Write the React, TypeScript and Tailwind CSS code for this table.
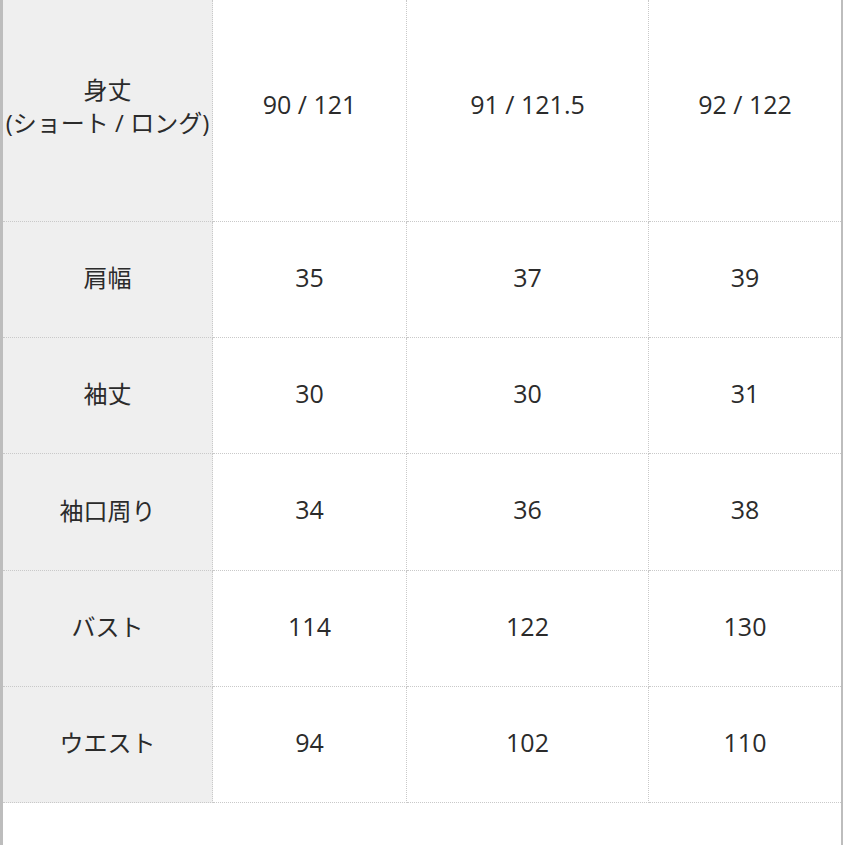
import React from "react";

const rows: { label: React.ReactNode; values: string[]; h: string }[] = [
  {
    label: (
      <>
        身丈
        <br />
        (ショート / ロング)
      </>
    ),
    values: ["90 / 121", "91 / 121.5", "92 / 122"],
    h: "h-[222px]",
  },
  { label: "肩幅", values: ["35", "37", "39"], h: "h-[116px]" },
  { label: "袖丈", values: ["30", "30", "31"], h: "h-[116px]" },
  { label: "袖口周り", values: ["34", "36", "38"], h: "h-[117px]" },
  { label: "バスト", values: ["114", "122", "130"], h: "h-[116px]" },
  { label: "ウエスト", values: ["94", "102", "110"], h: "h-[116px]" },
];

const widths = ["w-[194px]", "w-[242px]", "w-[192px]"];

export default function App() {
  return (
    <div
      className="w-[845px] h-[845px] bg-white overflow-hidden text-[#2b2b2b] text-[24px]"
      style={{ fontFamily: '"Open Sans", "Noto Sans CJK JP", sans-serif' }}
    >
      <div className="w-[843px] h-full border-l-[3px] border-r-[2px] border-[#bdbdbd] flex flex-col">
        {rows.map((row, i) => (
          <div key={i} className={`flex ${row.h}`}>
            <div className="w-[210px] bg-[#efefef] border-r border-b border-dotted border-[#c9c9c9] flex items-center justify-center text-center leading-[33px]">
              <span className={i === 0 ? "-mt-[10px]" : "-mt-1"}>{row.label}</span>
            </div>
            {row.values.map((v, j) => (
              <div
                key={j}
                className={`${widths[j]} ${j < 2 ? "border-r" : ""} border-b border-dotted border-[#c9c9c9] flex items-center justify-center text-[25px]`}
              >
                <span className={i === 0 ? "-mt-[11px]" : "-mt-1"}>{v}</span>
              </div>
            ))}
          </div>
        ))}
        <div className="flex-1 bg-white" />
      </div>
    </div>
  );
}
